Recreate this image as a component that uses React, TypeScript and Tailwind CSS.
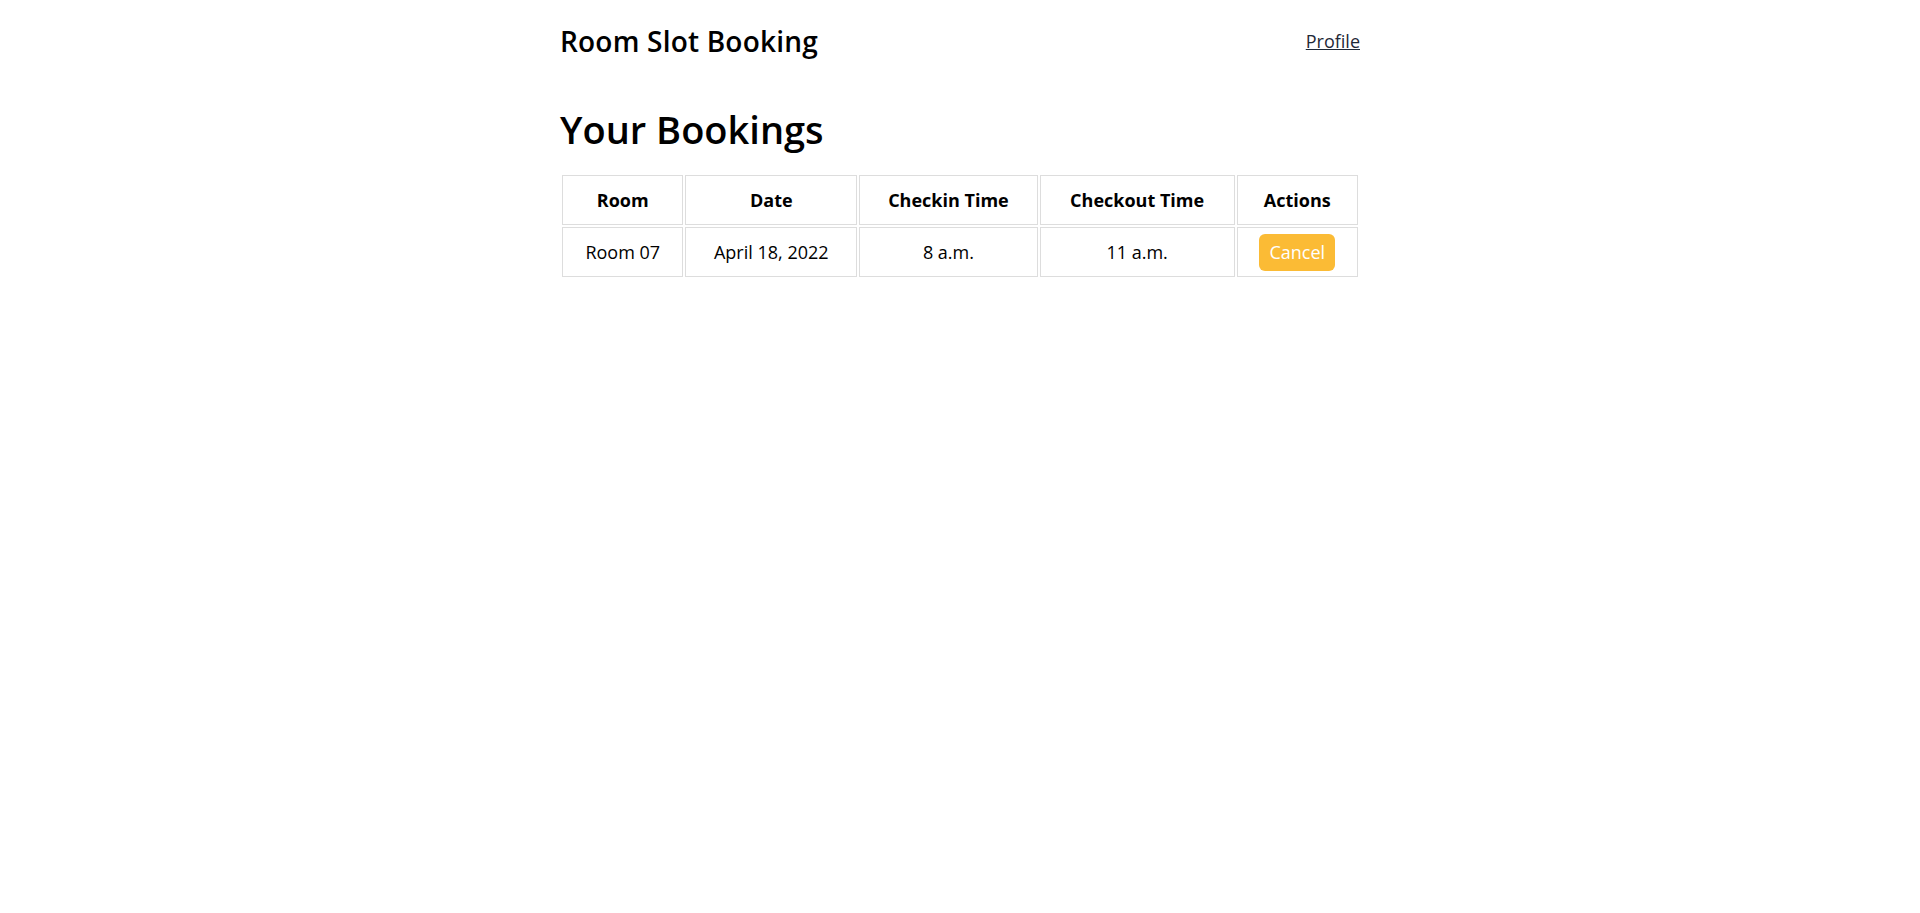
export default function App() {
  const rows = [{ room: 'Room 07', date: 'April 18, 2022', checkin: '8 a.m.', checkout: '11 a.m.' }]

  return (
    <div className="min-h-screen bg-white text-black" style={{ fontFamily: '"Open Sans", "Noto Sans", sans-serif' }}>
      <div className="mx-auto w-[800px]">
        <header className="flex items-center justify-between pt-[20px]">
          <h1 className="text-[28px] leading-[42px] font-semibold tracking-[0.2px]">Room Slot Booking</h1>
          <a href="#" className="text-[18px] text-[#1f2937] underline">
            Profile
          </a>
        </header>

        <h2 className="mt-[42px] text-[38px] leading-[50px] font-semibold">Your Bookings</h2>

        <table className="mt-[19px] w-full border-separate border-spacing-[2px] text-center text-[18px]">
          <thead>
            <tr>
              <th className="h-[50px] w-[121px] border border-[#dddddd] font-bold">Room</th>
              <th className="h-[50px] w-[171px] border border-[#dddddd] font-bold">Date</th>
              <th className="h-[50px] w-[178px] border border-[#dddddd] font-bold">Checkin Time</th>
              <th className="h-[50px] w-[194px] border border-[#dddddd] font-bold">Checkout Time</th>
              <th className="h-[50px] w-[121px] border border-[#dddddd] font-bold">Actions</th>
            </tr>
          </thead>
          <tbody>
            {rows.map((r) => (
              <tr key={r.room}>
                <td className="h-[50px] border border-[#dddddd]">{r.room}</td>
                <td className="h-[50px] border border-[#dddddd]">{r.date}</td>
                <td className="h-[50px] border border-[#dddddd]">{r.checkin}</td>
                <td className="h-[50px] border border-[#dddddd]">{r.checkout}</td>
                <td className="h-[50px] border border-[#dddddd]">
                  <button className="h-[37px] rounded-[6px] bg-[#fbbb35] px-[10px] text-[18px] text-white">
                    Cancel
                  </button>
                </td>
              </tr>
            ))}
          </tbody>
        </table>
      </div>
    </div>
  )
}
